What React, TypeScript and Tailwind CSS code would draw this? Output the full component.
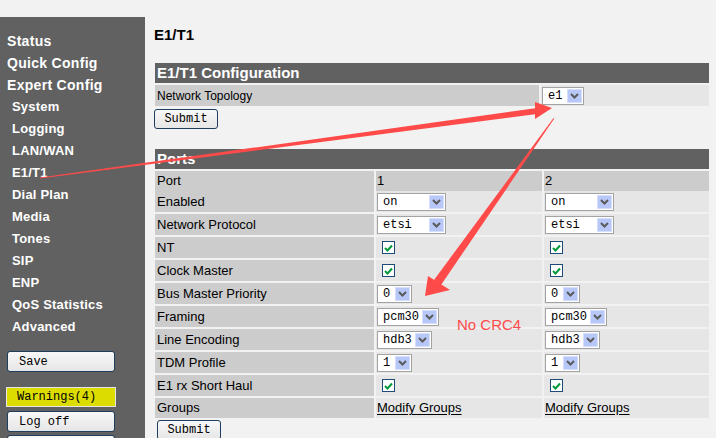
import React from 'react'

const sans = { fontFamily: '"Liberation Sans", Arial, sans-serif' }
const mono = { fontFamily: '"Liberation Mono", "Courier New", monospace' }

const topItems = ['Status', 'Quick Config', 'Expert Config']
const subItems = [
    'System',
    'Logging',
    'LAN/WAN',
    'E1/T1',
    'Dial Plan',
    'Media',
    'Tones',
    'SIP',
    'ENP',
    'QoS Statistics',
    'Advanced',
]

const Chevron = () => (
    <svg width="9" height="6" viewBox="0 0 9 6">
        <path d="M1 1 L4.5 4.5 L8 1" fill="none" stroke="#5a5a5a" strokeWidth="2" />
    </svg>
)

const Select = ({ value, className }: { value: string; className: string }) => (
    <div className={`flex h-[18px] items-center border border-[#a3a3a3] bg-white ${className}`}>
        <span className="flex-1 pl-[5px] text-[12px] leading-none text-black" style={mono}>
            {value}
        </span>
        <span className="mr-[1px] flex h-[14px] w-[15px] items-center justify-center border border-[#d5dffb] bg-[#b7c8f8]">
            <Chevron />
        </span>
    </div>
)

const Check = () => (
    <div className="ml-[5px] flex h-[13px] w-[13px] items-center justify-center border border-[#1d4b74] bg-white">
        <svg width="9" height="8" viewBox="0 0 9 8">
            <path d="M1 4 L3.5 6.5 L8 1.5" fill="none" stroke="#009a3a" strokeWidth="2" />
        </svg>
    </div>
)

const SideButton = ({ label, yellow }: { label?: string; yellow?: boolean }) => (
    <div
        className={
            yellow
                ? 'ml-[6px] flex h-[20px] w-[110px] items-center border border-[#e4e4e4] bg-[#dcdc00] pl-[10px] text-[12px] text-black'
                : 'ml-[7px] flex h-[21px] w-[108px] items-center rounded-[3px] border border-[#1f3d5c] bg-gradient-to-b from-[#f8f8f8] to-[#e6e6e6] pl-[11px] text-[12px] text-black'
        }
        style={mono}
    >
        {label}
    </div>
)

const SubmitButton = ({ className }: { className: string }) => (
    <div
        className={`flex h-[20px] w-[64px] items-center justify-center rounded-[3px] border border-[#1f3d5c] bg-gradient-to-b from-[#f8f8f8] to-[#e6e6e6] text-[12px] text-black ${className}`}
        style={mono}
    >
        Submit
    </div>
)

type Cell = { kind: 'select'; value: string; w: string } | { kind: 'check' } | { kind: 'link' }

const rows: { label: string; cell: Cell; short?: boolean }[] = [
    { label: 'Enabled', cell: { kind: 'select', value: 'on', w: 'w-[69px]' } },
    { label: 'Network Protocol', cell: { kind: 'select', value: 'etsi', w: 'w-[69px]' } },
    { label: 'NT', cell: { kind: 'check' } },
    { label: 'Clock Master', cell: { kind: 'check' } },
    { label: 'Bus Master Priority', cell: { kind: 'select', value: '0', w: 'w-[35px]' } },
    { label: 'Framing', cell: { kind: 'select', value: 'pcm30', w: 'w-[62px]' } },
    { label: 'Line Encoding', cell: { kind: 'select', value: 'hdb3', w: 'w-[55px]' } },
    { label: 'TDM Profile', cell: { kind: 'select', value: '1', w: 'w-[35px]' } },
    { label: 'E1 rx Short Haul', cell: { kind: 'check' } },
    { label: 'Groups', cell: { kind: 'link' }, short: true },
]

const renderCell = (cell: Cell) => {
    switch (cell.kind) {
        case 'select':
            return <Select value={cell.value} className={cell.w} />
        case 'check':
            return <Check />
        default:
            return <span className="text-[13px] text-black underline underline-offset-2">Modify Groups</span>
    }
}

export default function App() {
    return (
        <div className="relative min-h-screen w-[716px] overflow-hidden bg-[#f2f2f2] pt-[17px]" style={sans}>
            <div className="flex items-stretch">
                {/* sidebar */}
                <div className="w-[145px] shrink-0 bg-[#616161] pt-[13px] pb-[20px]">
                    {topItems.map((t) => (
                        <div key={t} className="h-[22px] pl-[7px] text-[14px] leading-[22px] font-bold tracking-[0.3px] text-white">
                            {t}
                        </div>
                    ))}
                    {subItems.map((t) => (
                        <div key={t} className="h-[22px] pl-[12px] text-[13px] leading-[22px] font-bold tracking-[0.2px] text-white">
                            {t}
                        </div>
                    ))}
                    <div className="mt-[13px] flex flex-col">
                        <SideButton label="Save" />
                        <div className="mt-[15px]">
                            <SideButton label="Warnings(4)" yellow />
                        </div>
                        <div className="mt-[4px]">
                            <SideButton label="Log off" />
                        </div>
                        <div className="mt-[3px]">
                            <SideButton />
                        </div>
                    </div>
                </div>

                {/* main */}
                <div className="ml-[9px] w-[555px]">
                    <div className="mt-[9px] h-[18px] text-[15px] leading-[18px] font-bold text-black">E1/T1</div>

                    <div className="mt-[19px] ml-[1px] flex w-[554px] flex-col gap-[2px]">
                        <div className="h-[20px] bg-[#616161] pl-[2px] text-[15px] leading-[20px] font-bold text-white">E1/T1 Configuration</div>
                        <div className="grid h-[21px] grid-cols-[384px_168px] gap-[2px]">
                            <div className="flex items-center bg-[#cccccc] pl-[2px] text-[12px] text-black">Network Topology</div>
                            <div className="flex items-center bg-[#e6e6e6] pl-[1px]">
                                <Select value="e1" className="w-[42px]" />
                            </div>
                        </div>
                    </div>
                    <SubmitButton className="mt-[3px]" />

                    <div className="mt-[20px] ml-[1px] flex w-[554px] flex-col gap-[2px]">
                        <div className="h-[20px] bg-[#616161] pl-[2px] text-[15px] leading-[20px] font-bold text-white">Ports</div>
                        <div className="grid h-[18px] grid-cols-[219px_166px_165px] gap-[2px] text-[13px] text-black">
                            <div className="flex items-center bg-[#cccccc] pl-[2px]">Port</div>
                            <div className="flex items-center bg-[#cccccc] pl-[1px]">1</div>
                            <div className="flex items-center bg-[#cccccc] pl-[1px]">2</div>
                        </div>
                        {rows.map((r) => (
                            <div
                                key={r.label}
                                className={`grid grid-cols-[219px_166px_165px] gap-[2px] text-[13px] text-black ${r.short ? 'h-[18px]' : 'h-[21px]'}`}
                            >
                                <div className="flex items-center bg-[#cccccc] pl-[2px]">{r.label}</div>
                                <div className="flex items-center bg-[#e6e6e6] pl-[1px]">{renderCell(r.cell)}</div>
                                <div className="flex items-center bg-[#e6e6e6] pl-[1px]">{renderCell(r.cell)}</div>
                            </div>
                        ))}
                    </div>
                    <SubmitButton className="mt-[4px] ml-[3px]" />
                </div>
            </div>

            {/* annotation */}
            <div className="absolute top-[317px] left-[457px] text-[15px] leading-[15px] text-[#ff4b4b]">No CRC4</div>
            <svg className="pointer-events-none absolute top-0 left-0" width="716" height="438" viewBox="0 0 716 438">
                <polygon points="40,177.6 537,108 537,114 40,178.6" fill="#ff4a4a" />
                <polygon points="535,102 552,108 535,119" fill="#ff4a4a" />
                <polygon points="553.5,118 554.3,118.6 441,285 434,280" fill="#ff4a4a" />
                <polygon points="428,276 450,290 425,296" fill="#ff4a4a" />
            </svg>
        </div>
    )
}
